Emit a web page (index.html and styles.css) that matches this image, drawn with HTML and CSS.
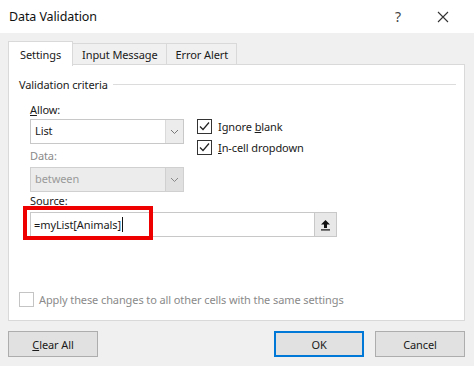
FILE: index.html
```html
<html>
  <head>
    <title>Data Validation</title>
    <meta http-equiv="Content-Type" content="text/html;charset=UTF-8" />
    <link rel="stylesheet" href="styles.css">
  </head>
  <body>
    <div class="dialog">
      <!-- title bar -->
      <div class="titlebar">
        <span class="title">Data Validation</span>
        <span class="help">?</span>
        <svg class="close" width="12" height="12" viewBox="0 0 12 12">
          <path d="M1 1 L11 11 M11 1 L1 11" stroke="#333" stroke-width="1.1" fill="none" />
        </svg>
      </div>

      <!-- tabs -->
      <div class="tabs">
        <div class="tab active">Settings</div>
        <div class="tab">Input Message</div>
        <div class="tab">Error Alert</div>
      </div>

      <div class="panel">
        <div class="group-title">
          <span>Validation criteria</span>
          <div class="group-line"></div>
        </div>

        <div class="criteria">
          <div class="left">
            <div class="label"><u>A</u>llow:</div>
            <div class="combo">
              <span class="value">List</span>
              <span class="arrow">
                <svg width="9" height="6" viewBox="0 0 9 6"><path d="M1 1 L4.5 4.5 L8 1" stroke="#777" fill="none" /></svg>
              </span>
            </div>
            <div class="label disabled">Data:</div>
            <div class="combo disabled">
              <span class="value">between</span>
              <span class="arrow">
                <svg width="9" height="6" viewBox="0 0 9 6"><path d="M1 1 L4.5 4.5 L8 1" stroke="#888" fill="none" /></svg>
              </span>
            </div>
          </div>
          <div class="checks">
            <label class="check">
              <span class="box">
                <svg width="13" height="13" viewBox="0 0 13 13"><path d="M2 6.5 L5 9.5 L11 2.5" stroke="#222" stroke-width="1.2" fill="none" /></svg>
              </span>
              <span>Ignore <u>b</u>lank</span>
            </label>
            <label class="check">
              <span class="box">
                <svg width="13" height="13" viewBox="0 0 13 13"><path d="M2 6.5 L5 9.5 L11 2.5" stroke="#222" stroke-width="1.2" fill="none" /></svg>
              </span>
              <span><u>I</u>n-cell dropdown</span>
            </label>
          </div>
        </div>

        <div class="label source-label"><u>S</u>ource:</div>
        <div class="source">
          <div class="source-input">
            <span>=myList[Animals]</span><span class="caret"></span>
          </div>
          <div class="source-btn">
            <svg width="11" height="12" viewBox="0 0 11 12">
              <path d="M5.5 1 L10 5.5 L7 5.5 L7 9 L4 9 L4 5.5 L1 5.5 Z" fill="#111" />
              <rect x="1" y="10.3" width="9" height="1.2" fill="#111" />
            </svg>
          </div>
          <!-- red highlight drawn over the field -->
          <div class="highlight"></div>
        </div>

        <div class="spacer"></div>

        <label class="check apply">
          <span class="box"></span>
          <span>Apply these changes to all other cells with the same settings</span>
        </label>
      </div>

      <div class="buttons">
        <div class="btn"><u>C</u>lear All</div>
        <div class="btn-right">
          <div class="btn default">OK</div>
          <div class="btn">Cancel</div>
        </div>
      </div>
    </div>
  </body>
</html>
```

FILE: styles.css
```css
body {
  margin: 0;
  background: #f0f0f0;
  font-family: "Noto Sans", "Open Sans", sans-serif;
  font-size: 11px;
  letter-spacing: -0.1px;
  color: #1a1a1a;
}

.dialog {
  width: 474px;
  height: 366px;
  display: flex;
  flex-direction: column;
}

.titlebar {
  height: 33px;
  background: #fff;
  display: flex;
  align-items: center;
  padding-left: 9px;
  flex-shrink: 0;
}

.title {
  font-size: 12.5px;
  flex: 1;
  color: #111;
}

.help {
  font-size: 14px;
  color: #444;
  margin-right: 36px;
}

.close {
  margin-right: 25px;
}

.tabs {
  display: flex;
  margin: 8px 0 0 8px;
  height: 23px;
  position: relative;
  z-index: 1;
}

.tab {
  padding: 0 8px 0 9px;
  display: flex;
  align-items: center;
  border: 1px solid #d9d9d9;
  border-bottom: none;
  border-left: none;
  background: #f0f0f0;
  margin-top: 2px;
}

.tab.active {
  background: #fff;
  border-left: 1px solid #d9d9d9;
  margin-top: 0;
  height: 24px;
  padding: 0 11px 0 11px;
}

.panel {
  margin: 0 9px 0 8px;
  height: 255px;
  background: #fff;
  border: 1px solid #d9d9d9;
  display: flex;
  flex-direction: column;
  padding: 0 0 0 10px;
}

.group-title {
  display: flex;
  align-items: center;
  margin-top: 10px;
  height: 18px;
}

.group-line {
  flex: 1;
  height: 1px;
  background: #dcdcdc;
  margin: 1px 8px 0 5px;
}

.criteria {
  display: flex;
  margin-left: 11px;
  margin-top: 8px;
}

.left {
  width: 154px;
  display: flex;
  flex-direction: column;
}

.label {
  height: 17px;
  line-height: 17px;
}

.label.disabled {
  color: #8a8a8a;
  margin-top: 3px;
}

.combo {
  height: 23px;
  border: 1px solid #c8c8c8;
  display: flex;
  margin-top: 1px;
}

.combo .value {
  flex: 1;
  padding-left: 4px;
  line-height: 22px;
}

.combo .arrow {
  width: 17px;
  background: #ececec;
  border-left: 1px solid #dadada;
  display: flex;
  align-items: center;
  justify-content: center;
}

.combo.disabled {
  background: #ececec;
  border-color: #d0d0d0;
  margin-top: 3px;
}

.combo.disabled .value {
  color: #9a9a9a;
}

.combo.disabled .arrow {
  background: #e0e0e0;
  border-left-color: #d0d0d0;
}

.checks {
  display: flex;
  flex-direction: column;
  margin-left: 13px;
  margin-top: 18px;
  gap: 7px;
}

.check {
  display: flex;
  align-items: center;
  height: 14px;
}

.box {
  width: 13px;
  height: 13px;
  border: 1px solid #333;
  margin-right: 6px;
  display: flex;
  background: #fff;
}

.source-label {
  margin: 0 0 0 11px;
}

.source {
  position: relative;
  display: flex;
  margin-left: 11px;
  margin-top: 3px;
  width: 305px;
  height: 23px;
  border: 1px solid #c8c8c8;
}

.source-input {
  flex: 1;
  display: flex;
  align-items: center;
  padding-left: 3px;
}

.caret {
  width: 1px;
  height: 15px;
  background: #111;
  margin-left: 1px;
}

.source-btn {
  width: 21px;
  border-left: 1px solid #c8c8c8;
  background: #e8e8e8;
  display: flex;
  align-items: center;
  justify-content: center;
}

.highlight {
  position: absolute;
  left: -8px;
  top: -7px;
  width: 122px;
  height: 26px;
  border: 4px solid #ee0000;
}

.spacer {
  flex: 1;
}

.apply {
  color: #8a8a8a;
  margin: 0 0 14px 0;
}

.apply .box {
  border-color: #c4c4c4;
  margin-right: 5px;
}

.buttons {
  display: flex;
  justify-content: space-between;
  margin: 10px 9px 0 8px;
}

.btn-right {
  display: flex;
  gap: 11px;
}

.btn {
  width: 88px;
  height: 24px;
  border: 1px solid #adadad;
  background: #e1e1e1;
  display: flex;
  align-items: center;
  justify-content: center;
}

.btn.default {
  border: 2px solid #0078d7;
  width: 86px;
  height: 22px;
}
```
